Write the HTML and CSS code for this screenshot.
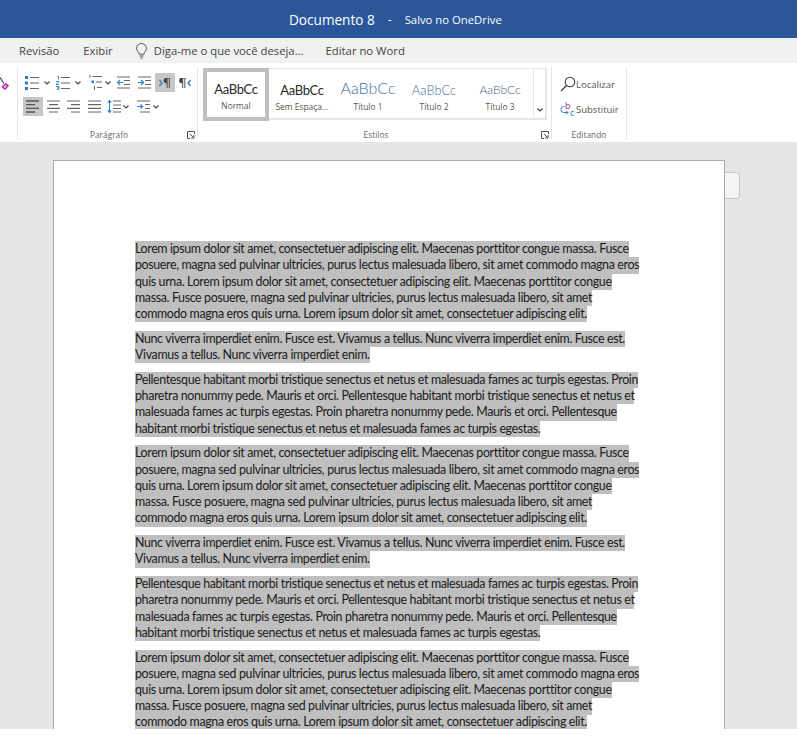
FILE: index.html
```html
<!DOCTYPE html>
<html lang="pt">
<head>
<meta charset="utf-8">
<title>Documento 8</title>
<link rel="stylesheet" href="styles.css">
</head>
<body>
<header class="titlebar"><span class="doc-name">Documento 8</span><span class="dash">-</span><span class="saved">Salvo no OneDrive</span></header>
<nav class="tabs">
  <span class="tab tab-rev">Revisão</span>
  <span class="tab tab-exi">Exibir</span>
  <svg class="bulb" width="11" height="16" viewBox="0 0 11 16"><path d="M3.2 11.2C2.8 9 .6 8 .6 5.4a4.9 4.9 0 0 1 9.8 0c0 2.6-2.2 3.600-2.600 5.800z M3.500 13h4 M4.300 15h2.400" fill="none" stroke="#555" stroke-width="1"/></svg>
  <span class="tab tab-tell">Diga-me o que você deseja...</span>
  <span class="tab">Editar no Word</span>
</nav>
<section class="ribbon">
  <div class="group g-clip">
    <svg width="10" height="16" viewBox="0 0 10 16"><path d="M0 1.500l4 6" stroke="#444" stroke-width="1.200" fill="none"/><path d="M1.500 11l4-4 3.500 2.500-4 4.500z" fill="#b4009e"/><path d="M3 11l2.500-2.500 1.800 1.300-2.500 2.700z" fill="#e9b8e2"/></svg>
  </div>
  <div class="group g-para">
    <div class="tools">
      <div class="tool-row">
        <span class="tool split"><svg width="14" height="14" viewBox="0 0 14 14"><path d="M0 0h3v3H0zM0 5.500h3v3H0zM0 11h3v3H0z" fill="#2e7fc4"/><path d="M5 1.500h9M5 7h9M5 12.500h9" stroke="#666" stroke-width="1.200"/></svg><svg class="chev" width="6" height="4" viewBox="0 0 6 4"><path d="M.5.500L3 3 5.500.500" fill="none" stroke="#444" stroke-width="1.100"/></svg></span>
        <span class="tool split"><svg width="14" height="14" viewBox="0 0 14 14"><path d="M1 0h1.500v3.500M0 5.500h3L0 8.500h3M0 10.500h3v3.500H0M1 12h2" fill="none" stroke="#2e7fc4" stroke-width=".9"/><path d="M5 1.500h9M5 7h9M5 12.500h9" stroke="#666" stroke-width="1.200"/></svg><svg class="chev" width="6" height="4" viewBox="0 0 6 4"><path d="M.5.500L3 3 5.500.500" fill="none" stroke="#444" stroke-width="1.100"/></svg></span>
        <span class="tool split s-short"><svg width="14" height="15" viewBox="0 0 14 15"><path d="M1 0h1v3" fill="none" stroke="#2e7fc4" stroke-width=".9"/><path d="M3.500 5.500h2.500v2.500H3.500z" fill="#2e7fc4"/><path d="M6.500 11v4" stroke="#666"/><path d="M4.500 1.500h9.500M8 7h6M9 12.500h5" stroke="#666" stroke-width="1.200"/></svg><svg class="chev" width="6" height="4" viewBox="0 0 6 4"><path d="M.5.500L3 3 5.500.500" fill="none" stroke="#444" stroke-width="1.100"/></svg></span>
        <span class="tool"><svg width="14" height="13" viewBox="0 0 14 13"><path d="M0 1h13M0 12h13M7 4.500h6M7 8.500h6" stroke="#666" stroke-width="1.200"/><path d="M6 6.500H.5M3 4L.5 6.500 3 9" fill="none" stroke="#2e7fc4" stroke-width="1.200"/></svg></span>
        <span class="tool"><svg width="13" height="13" viewBox="0 0 13 13"><path d="M0 1h13M0 12h13M7 4.500h6M7 8.500h6" stroke="#666" stroke-width="1.200"/><path d="M0 6.500h5.500M3 4l2.500 2.500L3 9" fill="none" stroke="#2e7fc4" stroke-width="1.200"/></svg></span>
        <span class="tool active"><svg width="12" height="10" viewBox="0 0 12 10"><path d="M.5 2L3 5 .5 8" fill="none" stroke="#2e7fc4" stroke-width="1.300"/><path d="M7.500 0h4M7.500 0a2.500 2.500 0 0 0 0 5zM8.200 0v10M10.300 0v10" fill="#444" stroke="#444" stroke-width=".9"/></svg></span>
        <span class="tool"><svg width="12" height="10" viewBox="0 0 12 10"><path d="M3 0h4M3 0a2.500 2.500 0 0 0 0 5zM3.700 0v10M5.800 0v10" fill="#444" stroke="#444" stroke-width=".9"/><path d="M11.500 2L9 5l2.500 3" fill="none" stroke="#2e7fc4" stroke-width="1.300"/></svg></span>
      </div>
      <div class="tool-row">
        <span class="tool active"><svg width="13" height="13" viewBox="0 0 13 13"><path d="M0 1h13M0 4.700h9M0 8.300h13M0 12h9" stroke="#555" stroke-width="1.300"/></svg></span>
        <span class="tool"><svg width="13" height="13" viewBox="0 0 13 13"><path d="M0 1h13M2 4.700h9M0 8.300h13M2 12h9" stroke="#666" stroke-width="1.200"/></svg></span>
        <span class="tool"><svg width="13" height="13" viewBox="0 0 13 13"><path d="M0 1h13M4 4.700h9M0 8.300h13M4 12h9" stroke="#666" stroke-width="1.200"/></svg></span>
        <span class="tool"><svg width="13" height="13" viewBox="0 0 13 13"><path d="M0 1h13M0 4.700h13M0 8.300h13M0 12h13" stroke="#666" stroke-width="1.200"/></svg></span>
        <span class="tool split s-line"><svg width="14" height="15" viewBox="0 0 14 15"><path d="M2.500 1v13" stroke="#2e7fc4" stroke-width="1"/><path d="M0 3.500L2.500 .8 5 3.500zM0 11.500L2.500 14.200 5 11.500z" fill="#2e7fc4"/><path d="M6 2h8M6 6h8M6 9.500h8M6 13h8" stroke="#666" stroke-width="1.200"/></svg><svg class="chev" width="6" height="4" viewBox="0 0 6 4"><path d="M.5.500L3 3 5.500.500" fill="none" stroke="#444" stroke-width="1.100"/></svg></span>
        <span class="tool split s-para"><svg width="13" height="13" viewBox="0 0 13 13"><path d="M0 1h13M8 4.500h5M8 8.500h5M3 12h10" stroke="#666" stroke-width="1.200"/><path d="M0 6.500h5.500M3.500 4.500l2 2-2 2" fill="none" stroke="#2e7fc4" stroke-width="1.200"/></svg><svg class="chev" width="6" height="4" viewBox="0 0 6 4"><path d="M.5.500L3 3 5.500.500" fill="none" stroke="#444" stroke-width="1.100"/></svg></span>
      </div>
    </div>
    <footer class="group-foot"><span></span><span class="group-name">Parágrafo</span><svg class="launcher" width="8" height="8" viewBox="0 0 8 8"><path d="M7.500 3V.5H.5v7H3M3 3l4 4M7 4v3H4" fill="none" stroke="#555" stroke-width="1"/></svg></footer>
  </div>
  <div class="group g-styles">
    <div class="gallery">
      <div class="style-cell selected"><span class="preview">AaBbCc</span><span class="style-name">Normal</span></div>
      <div class="style-cell"><span class="preview">AaBbCc</span><span class="style-name">Sem Espaça...</span></div>
      <div class="style-cell"><span class="preview h1">AaBbCc</span><span class="style-name">Título 1</span></div>
      <div class="style-cell"><span class="preview h2">AaBbCc</span><span class="style-name">Título 2</span></div>
      <div class="style-cell"><span class="preview h3">AaBbCc</span><span class="style-name">Título 3</span></div>
      <div class="gallery-more"><svg width="6" height="4" viewBox="0 0 6 4"><path d="M.5.500L3 3 5.500.500" fill="none" stroke="#444" stroke-width="1.200"/></svg></div>
    </div>
    <footer class="group-foot"><span></span><span class="group-name">Estilos</span><svg class="launcher" width="8" height="8" viewBox="0 0 8 8"><path d="M7.500 3V.5H.5v7H3M3 3l4 4M7 4v3H4" fill="none" stroke="#555" stroke-width="1"/></svg></footer>
  </div>
  <div class="group g-edit">
    <div class="edit-list">
      <div class="edit-item"><svg width="16" height="16" viewBox="0 0 16 16"><circle cx="10" cy="6" r="4.800" fill="none" stroke="#444" stroke-width="1.100"/><path d="M6.500 9.500L1 15" stroke="#444" stroke-width="1.500"/></svg><span>Localizar</span></div>
      <div class="edit-item"><svg width="16" height="20" viewBox="0 0 16 20"><text x="5" y="10" class="rep-b">b</text><text x="10" y="16.500" class="rep-c">c</text><path d="M4.500 7.500H3.500Q1 7.500 1 10.500t2.500 3H8M6 11.500l2 2-2 2" fill="none" stroke="#2e7fc4" stroke-width="1"/></svg><span>Substituir</span></div>
    </div>
    <footer class="group-foot"><span></span><span class="group-name">Editando</span><span></span></footer>
  </div>
</section>
<main class="canvas">
  <article class="page">
    <p><span>Lorem ipsum dolor sit amet, consectetuer adipiscing elit. Maecenas porttitor congue massa. Fusce</span><span>posuere, magna sed pulvinar ultricies, purus lectus malesuada libero, sit amet commodo magna eros</span><span>quis urna. Lorem ipsum dolor sit amet, consectetuer adipiscing elit. Maecenas porttitor congue</span><span>massa. Fusce posuere, magna sed pulvinar ultricies, purus lectus malesuada libero, sit amet</span><span>commodo magna eros quis urna. Lorem ipsum dolor sit amet, consectetuer adipiscing elit.</span></p>
    <p><span>Nunc viverra imperdiet enim. Fusce est. Vivamus a tellus. Nunc viverra imperdiet enim. Fusce est.</span><span>Vivamus a tellus. Nunc viverra imperdiet enim.</span></p>
    <p><span>Pellentesque habitant morbi tristique senectus et netus et malesuada fames ac turpis egestas. Proin</span><span>pharetra nonummy pede. Mauris et orci. Pellentesque habitant morbi tristique senectus et netus et</span><span>malesuada fames ac turpis egestas. Proin pharetra nonummy pede. Mauris et orci. Pellentesque</span><span>habitant morbi tristique senectus et netus et malesuada fames ac turpis egestas.</span></p>
    <p><span>Lorem ipsum dolor sit amet, consectetuer adipiscing elit. Maecenas porttitor congue massa. Fusce</span><span>posuere, magna sed pulvinar ultricies, purus lectus malesuada libero, sit amet commodo magna eros</span><span>quis urna. Lorem ipsum dolor sit amet, consectetuer adipiscing elit. Maecenas porttitor congue</span><span>massa. Fusce posuere, magna sed pulvinar ultricies, purus lectus malesuada libero, sit amet</span><span>commodo magna eros quis urna. Lorem ipsum dolor sit amet, consectetuer adipiscing elit.</span></p>
    <p><span>Nunc viverra imperdiet enim. Fusce est. Vivamus a tellus. Nunc viverra imperdiet enim. Fusce est.</span><span>Vivamus a tellus. Nunc viverra imperdiet enim.</span></p>
    <p><span>Pellentesque habitant morbi tristique senectus et netus et malesuada fames ac turpis egestas. Proin</span><span>pharetra nonummy pede. Mauris et orci. Pellentesque habitant morbi tristique senectus et netus et</span><span>malesuada fames ac turpis egestas. Proin pharetra nonummy pede. Mauris et orci. Pellentesque</span><span>habitant morbi tristique senectus et netus et malesuada fames ac turpis egestas.</span></p>
    <p class="last"><span>Lorem ipsum dolor sit amet, consectetuer adipiscing elit. Maecenas porttitor congue massa. Fusce</span><span>posuere, magna sed pulvinar ultricies, purus lectus malesuada libero, sit amet commodo magna eros</span><span>quis urna. Lorem ipsum dolor sit amet, consectetuer adipiscing elit. Maecenas porttitor congue</span><span>massa. Fusce posuere, magna sed pulvinar ultricies, purus lectus malesuada libero, sit amet</span><span>commodo magna eros quis urna. Lorem ipsum dolor sit amet, consectetuer adipiscing elit.</span></p>
  </article>
  <div class="side-tab"></div>
</main>
<div class="bottom-strip"></div>
</body>
</html>
```

FILE: styles.css
```css
* { box-sizing: border-box; }
html, body { margin: 0; height: 100%; }
body {
  height: 745px;
  overflow: hidden;
  display: flex;
  flex-direction: column;
  background: #fff;
  font-family: "Open Sans", "Noto Sans", sans-serif;
}
svg { display: block; flex: none; }

.titlebar {
  height: 38px;
  flex: none;
  background: #2b579a;
  color: #fff;
  display: flex;
  align-items: center;
  padding-left: 289px;
}
.doc-name { font-size: 13.600px; }
.dash { font-size: 12px; margin-left: 13px; }
.saved { font-size: 11.300px; margin-left: 13px; }

.tabs {
  height: 25px;
  flex: none;
  background: #f0f1f1;
  display: flex;
  align-items: center;
  padding-left: 19px;
  font-size: 11.300px;
  color: #444;
}
.tab-rev { margin-right: 24px; }
.tab-exi { margin-right: 23px; }
.bulb { margin-right: 7px; }
.tab-tell { margin-right: 22px; }

.ribbon {
  height: 79px;
  flex: none;
  background: #fff;
  display: flex;
  padding-top: 4px;
}
.group {
  height: 72px;
  border-right: 1px solid #e6e6e6;
  display: flex;
  flex-direction: column;
  justify-content: space-between;
}
.g-clip { width: 18px; padding-top: 9px; }
.g-para { width: 180px; padding-left: 5px; padding-right: 2px; }
.g-styles { width: 354px; padding-left: 5px; padding-right: 2px; }
.g-edit { width: 75px; }

.tools { display: flex; flex-direction: column; gap: 5px; padding-top: 6px; }
.tool-row { display: flex; align-items: center; gap: 1px; height: 19px; }
.tool {
  width: 19.500px;
  height: 19px;
  display: flex;
  align-items: center;
  justify-content: center;
  flex: none;
}
.tool.active { background: #c6c6c6; }
.split { width: 30px; justify-content: flex-start; gap: 5px; padding-left: 2px; }
.s-short { width: 28px; padding-left: 3px; gap: 3px; }
.s-line { width: 26px; padding-left: 2px; gap: 2px; }
.s-para { width: 26px; padding-left: 4px; margin-left: 1px; gap: 3px; }

.group-foot {
  display: grid;
  grid-template-columns: 1fr auto 1fr;
  align-items: center;
  height: 8px;
}
.group-name { font-size: 8.400px; color: #666; line-height: 8px; }
.launcher { justify-self: end; }

.gallery {
  height: 52px;
  width: 344px;
  display: flex;
  border: 2px solid #e6e6e6;
  border-left: 0;
  border-top-width: 1px;
  margin-top: 1px;
}
.style-cell {
  width: 66px;
  flex: none;
  display: flex;
  flex-direction: column;
  align-items: center;
  padding-top: 11px;
  overflow: hidden;
}
.style-cell.selected { border: 4px solid #bfbfbf; padding-top: 7px; margin-top: -1px; margin-bottom: -2px; height: 53px; }
.preview {
  font-family: "Lato", sans-serif;
  font-size: 13px;
  line-height: 20px;
  height: 20px;
  letter-spacing: -.35px;
  color: #2a2a2a;
}
.preview.h1 { font-size: 16px; color: #3f6ea5; font-weight: 300; letter-spacing: 0; margin-top: -2px; height: 22px; }
.preview.h2 { font-size: 12.900px; color: #4a6f9a; font-weight: 300; letter-spacing: 0; }
.preview.h3 { font-size: 12px; color: #3f5f85; font-weight: 300; letter-spacing: 0; }
.style-name { font-size: 8.400px; line-height: 12px; margin-top: 1px; color: #555; white-space: nowrap; }
.gallery-more {
  flex: 1;
  border-left: 1px solid #e6e6e6;
  display: flex;
  align-items: flex-end;
  justify-content: center;
  padding-bottom: 6px;
}

.edit-list { display: flex; flex-direction: column; gap: 9px; padding: 9px 0 0 8px; }
.edit-item { display: flex; align-items: center; height: 16px; font-size: 9.500px; color: #555; }
.rep-b { font-size: 9px; fill: #a4289f; font-family: "Open Sans", sans-serif; }
.rep-c { font-size: 9px; fill: #2e7fc4; font-family: "Open Sans", sans-serif; }

.canvas {
  height: 587px;
  flex: none;
  background: #e6e6e6;
  padding: 18px 0 0 53px;
  display: flex;
  align-items: flex-start;
  overflow: hidden;
}
.page {
  width: 672px;
  height: 569px;
  flex: none;
  background: #fff;
  border: 1px solid #ababab;
  border-bottom: 0;
  padding: 80px 0 0 81px;
  font-family: "Lato", sans-serif;
  font-size: 12.400px;
  letter-spacing: -.35px;
  font-variant-ligatures: none;
  color: #1a1a1a;
}
.page p { margin: 0 0 8.500px; }
.page p span {
  display: block;
  width: fit-content;
  white-space: nowrap;
  height: 16.250px;
  line-height: 16.250px;
  background: #bfbfbf;
}
.page p.last { margin: 0; }
.page p.last span:last-child { height: 14.500px; line-height: 14.500px; }
.side-tab {
  width: 15px;
  height: 27px;
  margin-top: 12px;
  background: #f3f4f4;
  border: 1px solid #c8c8c8;
  border-left: 0;
  border-radius: 0 3px 3px 0;
  flex: none;
}
.bottom-strip { flex: 1; background: #fff; }
```
